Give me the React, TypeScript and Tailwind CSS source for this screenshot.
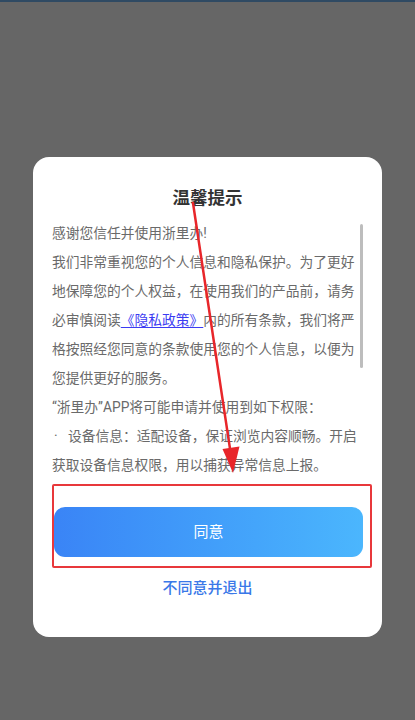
export default function App() {
  return (
    <div
      className="relative min-h-[720px] w-full overflow-hidden bg-[#666666]"
      style={{ fontFamily: 'Roboto, "Noto Sans CJK SC", sans-serif' }}
    >
      <div className="h-[2px] bg-[#2f4a63]" />

      {/* Dialog */}
      <div className="relative mx-auto mt-[155px] w-[349px] rounded-[16px] bg-white pt-[29px] pb-[38px]">
        <h3 className="text-center text-[17.5px] font-bold leading-[24px] text-[#333333]">温馨提示</h3>

        {/* Scrollable body */}
        <div className="relative mt-[8.5px] h-[261px] pl-[19px]">
          <div className="w-[306px] text-[13.75px] leading-[29px] text-[#6a6a6a]">
            <p>感谢您信任并使用浙里办!</p>
            <p>
              我们非常重视您的个人信息和隐私保护。为了更好地保障您的个人权益，在使用我们的产品前，请务必审慎阅读
              <span className="text-[#3b3bf2] underline underline-offset-2">《隐私政策》</span>
              内的所有条款，我们将严格按照经您同意的条款使用您的个人信息，以便为您提供更好的服务。
            </p>
            <p>“浙里办”APP将可能申请并使用到如下权限：</p>
            <p>
              <span className="inline-block w-[16px] pl-[2px]">·</span>
              设备信息：适配设备，保证浏览内容顺畅。开启获取设备信息权限，用以捕获异常信息上报。
            </p>
          </div>
          <div className="absolute left-[327px] top-[5px] h-[144px] w-[3px] rounded-full bg-[#bdbdbd]" />
        </div>

        {/* Actions */}
        <button className="ml-[21px] mt-[27.5px] flex h-[50px] w-[309px] items-center justify-center rounded-[11px] bg-gradient-to-r from-[#3a84f6] to-[#4bb6fd] text-[15px] text-white">
          同意
        </button>
        <button className="mx-auto mt-[20px] block text-[15px] font-medium leading-[22px] text-[#3a78e8]">
          不同意并退出
        </button>

        {/* Annotation box */}
        <div className="pointer-events-none absolute left-[19px] top-[327px] h-[84px] w-[320px] rounded-[2px] border-2 border-[#e8383b]" />
      </div>

      {/* Annotation arrow */}
      <svg className="pointer-events-none absolute left-0 top-0" width="415" height="720" viewBox="0 0 415 720">
        <line x1="193" y1="203" x2="230.5" y2="452" stroke="#e8262a" strokeWidth="2.5" strokeLinecap="round" />
        <polygon points="233,473 222.5,449 239.5,446.5" fill="#e8262a" />
      </svg>
    </div>
  );
}
